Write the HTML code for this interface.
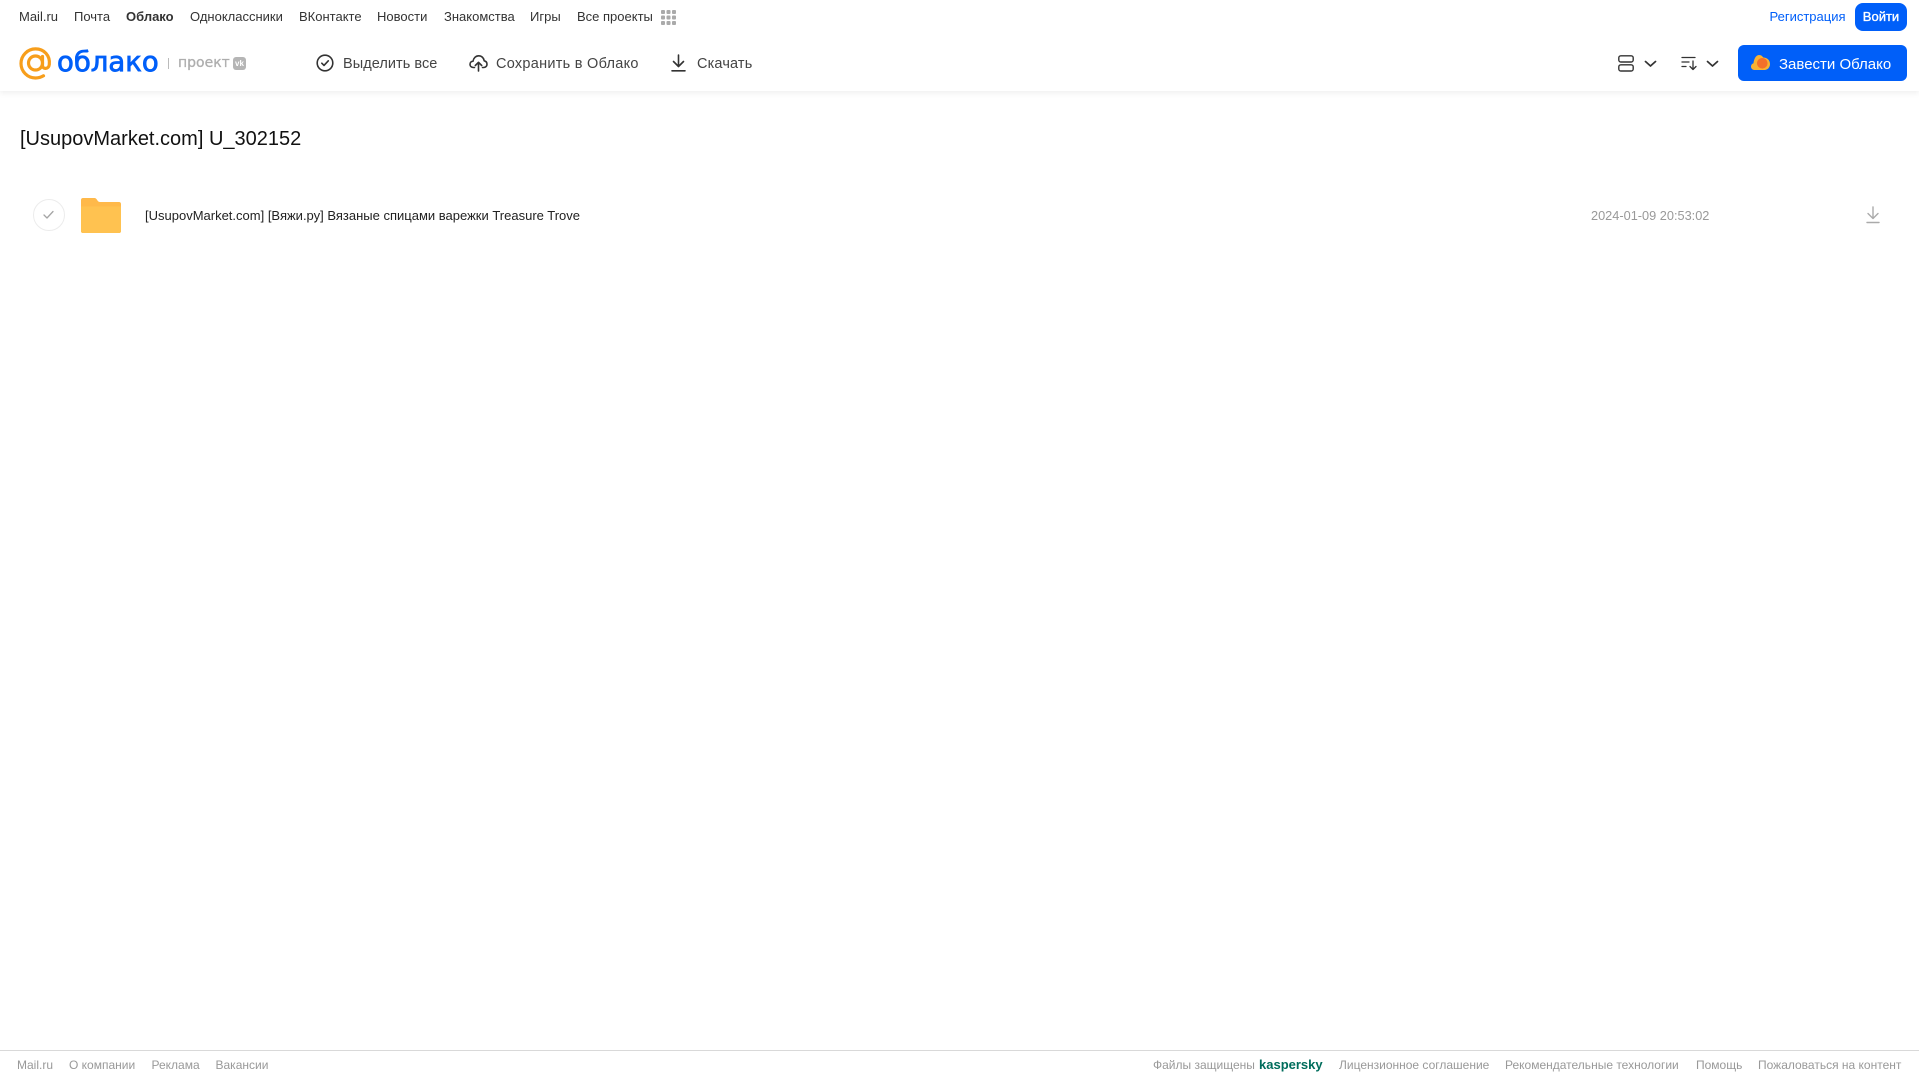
<!DOCTYPE html>
<html lang="ru"><head><meta charset="utf-8"><title>Облако</title>
<style>
html,body{margin:0;padding:0;background:#fff;width:1919px;height:1079px;overflow:hidden;font-family:"Liberation Sans",Arial,sans-serif}
.a{position:absolute;white-space:nowrap;line-height:16px}
.n{top:9px;font-size:13px;color:#333}
.t{top:55.500px;font-size:14.5px;color:#444;line-height:17px}
.f{top:1057px;font-size:12px;color:#999}
svg{position:absolute;display:block}
</style></head><body>
<div class="a" style="left:0;top:0;width:1919px;height:91px;background:#fff;box-shadow:0 2px 6px rgba(0,0,0,.07);line-height:normal"></div>
<span class="a n" style="left:19px">Mail.ru</span>
<span class="a n" style="left:74px">Почта</span>
<span class="a n" style="left:126px;font-weight:bold">Облако</span>
<span class="a n" style="left:190px">Одноклассники</span>
<span class="a n" style="left:299px">ВКонтакте</span>
<span class="a n" style="left:377px">Новости</span>
<span class="a n" style="left:444px">Знакомства</span>
<span class="a n" style="left:530px">Игры</span>
<span class="a n" style="left:577px">Все проекты</span>
<svg style="left:661px;top:10px" width="15" height="15" fill="#aaa"><rect width="4" height="4" rx="1"/><rect x="5.500" width="4" height="4" rx="1"/><rect x="11" width="4" height="4" rx="1"/><rect y="5.500" width="4" height="4" rx="1"/><rect x="5.500" y="5.500" width="4" height="4" rx="1"/><rect x="11" y="5.500" width="4" height="4" rx="1"/><rect y="11" width="4" height="4" rx="1"/><rect x="5.500" y="11" width="4" height="4" rx="1"/><rect x="11" y="11" width="4" height="4" rx="1"/></svg>
<span class="a n" style="left:1769.500px;color:#005ff9">Регистрация</span>
<div class="a" style="left:1855px;top:3px;width:52px;height:28px;line-height:27px;background:#005ff9;border-radius:8px;color:#fff;font-size:13px;-webkit-text-stroke:.35px #fff;text-align:center">Войти</div>

<svg style="left:19px;top:47px" width="33" height="33" viewBox="0 0 33 33" fill="none" stroke="#f79e1b" stroke-width="3.200"><circle cx="16.500" cy="16" r="7"/><path d="M23.500 9.500V18.500C23.500 22.500 29.800 22.500 30.300 17.500C31.300 8.500 25 1.900 16.500 1.900C8.500 1.900 2 8.500 2 16.500C2 24.500 8.500 31 16.500 31C19.500 31 22 30.300 24.500 28.800" stroke-linecap="round"/></svg>
<span class="a" style="left:57px;top:44px;line-height:36px;font-family:'DejaVu Sans',sans-serif;font-size:27.500px;color:#005ff9;-webkit-text-stroke:.8px #005ff9">облако</span>
<div class="a" style="left:168px;top:58px;width:1px;height:11px;background:#bbb"></div>
<span class="a" style="left:178px;top:54px;font-family:'DejaVu Sans',sans-serif;font-size:14px;color:#aeaeae;-webkit-text-stroke:.3px #aeaeae;line-height:18px">проект</span>
<div class="a" style="left:233px;top:57px;width:13px;height:13px;background:#b5b5b5;border-radius:3px;color:#fff;font-size:8px;font-weight:bold;line-height:13px;text-align:center">vk</div>

<svg style="left:316px;top:54px" width="18" height="18" fill="none" stroke="#333" stroke-width="1.600" stroke-linecap="round" stroke-linejoin="round"><circle cx="9" cy="9" r="7.800"/><path d="M5.800 9.200L8 11.400L12.300 6.800"/></svg>
<span class="a t" style="left:343px;letter-spacing:.05px">Выделить все</span>
<svg style="left:469px;top:54px" width="19" height="18" fill="none" stroke="#333" stroke-width="1.600" stroke-linecap="round" stroke-linejoin="round"><path d="M5.500 13.500H4.500C2.300 13.500 1 12 1 10.300C1 8.500 2.300 7.300 4 7.200C4.500 4 6.800 1.800 9.700 1.800C12.700 1.800 14.800 4 15.200 6.800C17 7.200 18 8.500 18 10.200C18 12 16.600 13.500 14.600 13.500H13.500"/><path d="M9.500 17V8.500M6.300 11.500L9.500 8.300L12.700 11.500"/></svg>
<span class="a t" style="left:496px;letter-spacing:.27px">Сохранить в Облако</span>
<svg style="left:671px;top:54px" width="15" height="18" fill="none" stroke="#333" stroke-width="1.600" stroke-linecap="round" stroke-linejoin="round"><path d="M7.500 1V12M2.500 7.500L7.500 12.500L12.500 7.500M1 16.800H14"/></svg>
<span class="a t" style="left:697px;letter-spacing:.15px">Скачать</span>

<svg style="left:1618px;top:55px" width="16" height="17" fill="none" stroke="#333" stroke-width="1.400"><rect x=".8" y=".8" width="14.400" height="6.200" rx="2"/><rect x=".8" y="9.800" width="14.400" height="6.200" rx="2"/></svg>
<svg style="left:1643.500px;top:60px" width="13" height="8" fill="none" stroke="#333" stroke-width="1.700" stroke-linecap="round" stroke-linejoin="round"><path d="M1.500 1.500L6.500 6L11.500 1.500"/></svg>
<svg style="left:1681px;top:56px" width="17" height="15" fill="none" stroke="#333" stroke-width="1.300" stroke-linecap="round" stroke-linejoin="round"><path d="M1 1.500H14M1 6H8M1 10.500H5"/><path d="M12 5V13M9 10.500L12 13.500L15 10.500"/></svg>
<svg style="left:1706px;top:60px" width="13" height="8" fill="none" stroke="#333" stroke-width="1.700" stroke-linecap="round" stroke-linejoin="round"><path d="M1.500 1.500L6.500 6L11.500 1.500"/></svg>
<div class="a" style="left:1738px;top:45px;width:169px;height:36px;background:#005ff9;border-radius:6px"></div>
<svg style="left:1751px;top:54px" width="19" height="17" viewBox="0 0 19 17"><path d="M3.500 16C1.500 16 0 14.500 0 12.500C0 10.800 1 9.600 2.500 9.200C2.800 6 4.500 1 8 1C10.500 1 11.500 2.500 12.300 3.500C15.800 3.500 19 6 19 10C19 13.500 16.500 16 13.500 16Z" fill="#f9b233"/><circle cx="11.300" cy="9.300" r="5.300" fill="#f4702a"/></svg>
<span class="a t" style="left:1779px;color:#fff;font-size:15px">Завести Облако</span>

<div class="a" style="left:20px;top:125.500px;line-height:26px;font-size:20px;color:#111">[UsupovMarket.com] U_302152</div>

<div class="a" style="left:33px;top:199px;width:30px;height:30px;border:1px solid #ececec;border-radius:50%"></div>
<svg style="left:43px;top:210px" width="11" height="10" fill="none" stroke="#a5a5a5" stroke-width="1.300" stroke-linecap="round" stroke-linejoin="round"><path d="M1 5L4 8L10 1.500"/></svg>
<svg style="left:81px;top:198px" width="40" height="35" viewBox="0 0 40 35"><path d="M2 0H13C15 0 15.500 1 16.500 2.500C17 3.500 18 4 19 4H38C39.200 4 40 4.800 40 6V33C40 34.200 39.200 35 38 35H2C.8 35 0 34.200 0 33V2C0 .8 .8 0 2 0Z" fill="#ffb94a"/><path d="M0 8.500H40V33C40 34.200 39.200 35 38 35H2C.8 35 0 34.200 0 33Z" fill="#ffc250"/></svg>
<span class="a" style="left:145px;top:207.500px;font-size:13px;color:#222">[UsupovMarket.com] [Вяжи.ру] Вязаные спицами варежки Treasure Trove</span>
<span class="a" style="left:1591px;top:207.500px;font-size:12.750px;color:#999">2024-01-09 20:53:02</span>
<svg style="left:1866px;top:206px" width="14" height="18" fill="none" stroke="#aaa" stroke-width="1.400" stroke-linecap="round" stroke-linejoin="round"><path d="M7 1V12M2 7.500L7 12.500L12 7.500M1 16.500H13"/></svg>

<div class="a" style="left:0;top:1050px;width:1919px;height:1px;background:#d9d9d9"></div>
<span class="a f" style="left:17px">Mail.ru</span>
<span class="a f" style="left:69px">О компании</span>
<span class="a f" style="left:151.500px">Реклама</span>
<span class="a f" style="left:215.500px">Вакансии</span>
<span class="a f" style="left:1153px">Файлы защищены</span>
<span class="a f" style="left:1259px;color:#006d5c;font-weight:bold;font-size:13px">kaspersky</span>
<span class="a f" style="left:1339px">Лицензионное соглашение</span>
<span class="a f" style="left:1505px">Рекомендательные технологии</span>
<span class="a f" style="left:1696px">Помощь</span>
<span class="a f" style="left:1758px">Пожаловаться на контент</span>
</body></html>
